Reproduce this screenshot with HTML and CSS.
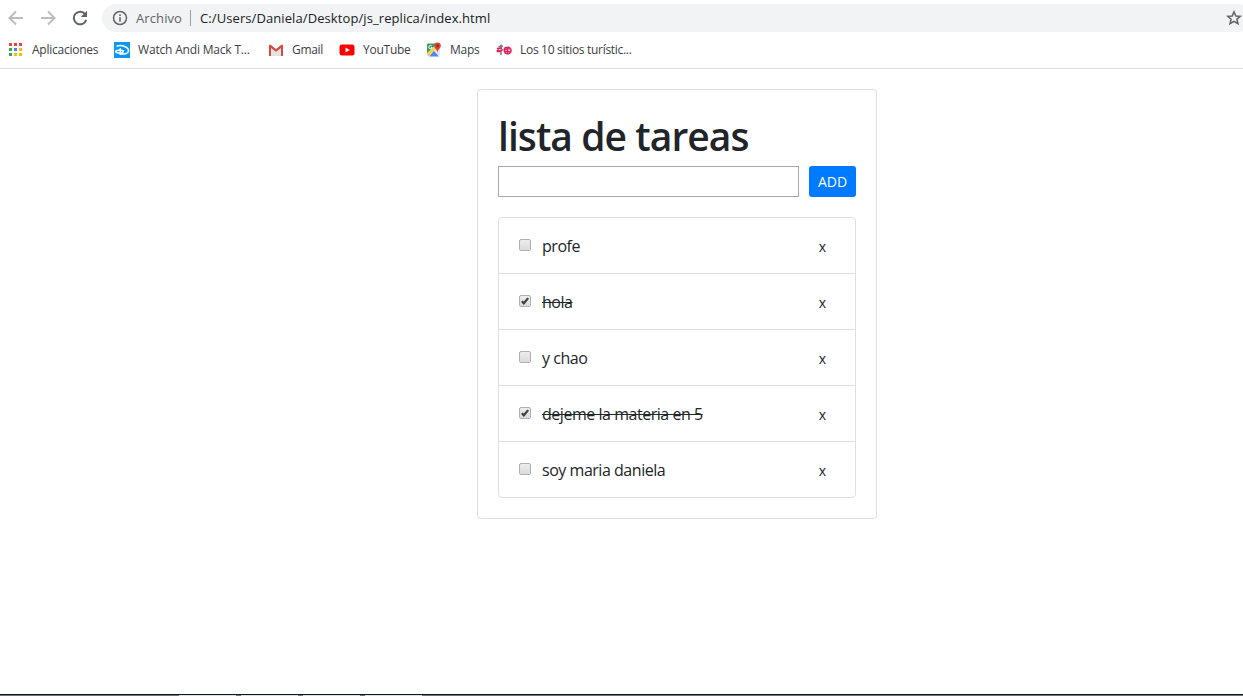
FILE: index.html
```html
<!DOCTYPE html>
<html lang="es">
<head>
<meta charset="utf-8">
<title>lista de tareas</title>
<link rel="stylesheet" href="styles.css">
</head>
<body>
<header class="browser">
  <div class="toolbar">
    <svg class="nav back" width="16" height="16" viewBox="0 0 16 16"><path d="M15 8H2M8 1.500L1.500 8L8 14.500"/></svg>
    <svg class="nav forward" width="16" height="16" viewBox="0 0 16 16"><path d="M1 8H14M8 1.500L14.500 8L8 14.500"/></svg>
    <svg class="nav reload" width="16" height="16" viewBox="0 0 16 16"><path d="M13.200 4.300A6.300 6.300 0 1 0 14.200 9.700"/><path class="tip" d="M15 .8V7H8.800z"/></svg>
    <div class="address">
      <svg class="info" width="16" height="16" viewBox="0 0 16 16"><circle cx="8" cy="8" r="6.500"/><path d="M8 7V11.700M8 4.300V6"/></svg>
      <span class="scheme">Archivo</span>
      <span class="url">C:/Users/Daniela/Desktop/js_replica/index.html</span>
      <svg class="star" width="16" height="16" viewBox="0 0 16 16"><path d="M8 1.800L9.800 6L14.300 6.300L10.900 9.300L12 13.700L8 11.300L4 13.700L5.100 9.300L1.700 6.300L6.200 6z"/></svg>
    </div>
  </div>
  <nav class="bookmarks">
    <a class="bookmark apps"><svg width="16" height="16" viewBox="0 0 16 16"><path fill="#ea4335" d="M1 1h3v3H1zM6 1h3v3H6zM11 1h3v3h-3z"/><path fill="#34a853" d="M1 6h3v3H1zM1 11h3v3H1z"/><path fill="#4285f4" d="M6 6h3v3H6z"/><path fill="#fbbc05" d="M11 6h3v3h-3zM6 11h3v3H6zM11 11h3v3h-3z"/></svg><span>Aplicaciones</span></a>
    <a class="bookmark disney"><svg width="16" height="16" viewBox="0 0 16 16"><path fill="#0a97f5" d="M0 0h16v16H0z"/><path fill="none" stroke="#fff" stroke-width="1.500" d="M2.500 4.200C8 2.500 14.800 5 14.500 8.800C14.200 12.200 9.500 12.300 6.800 12M6.300 6.300V13M10 9.300C6 7.500 1.500 8 1.700 9.500C2 11.200 6 11.300 9.500 10.300"/></svg><span>Watch Andi Mack T...</span></a>
    <a class="bookmark gmail"><svg width="16" height="16" viewBox="0 0 16 16"><path fill="#e3e3e3" d="M2 3h12v11H2z"/><path fill="#fff" d="M3 3h10L8 7z"/><path fill="#d54b3d" d="M1 3.500Q1 2.500 2.200 2.500L8 7.100L13.800 2.500Q15 2.500 15 3.500V14H13V6L8 9.800L3 6V14H1z"/></svg><span>Gmail</span></a>
    <a class="bookmark youtube"><svg width="16" height="16" viewBox="0 0 16 16"><rect x=".5" y="2.500" width="15" height="11" rx="2.500" fill="#f00"/><path fill="#fff" d="M6.500 5.500v5L10.800 8z"/></svg><span>YouTube</span></a>
    <a class="bookmark maps"><svg width="16" height="16" viewBox="0 0 16 16"><path fill="#34a261" d="M1 2.500Q1 1.500 2 1.500H11L1 12z"/><path fill="#e4e6e8" d="M1 12L11 2l3 3V13L11 14L8 9L3 14H1z"/><path fill="#ffd04c" d="M1 11L8.500 4.500L10 7L3 14Q1 14 1 12z"/><path fill="#4a89f3" d="M3 14.500l5-5.500 5 5.500z"/><path fill="none" stroke="#fff" d="M5.800 4A1.700 1.700 0 1 0 6.200 5.500H4.700"/><path fill="#db4437" d="M11.500.5A3.300 3.300 0 0 0 8.200 3.800C8.200 6.500 10.800 7 11.500 10.500C12.200 7 14.800 6.500 14.800 3.800A3.300 3.300 0 0 0 11.500.5"/><circle cx="11.500" cy="3.800" r="1.200" fill="#862d26"/></svg><span>Maps</span></a>
    <a class="bookmark tour"><svg width="16" height="16" viewBox="0 0 16 16"><g fill="none" stroke-width="1.400"><path stroke="#777" d="M2.500 4.500L7 4M5 2.500V13"/><path stroke="#df245e" d="M1 6.500L6 6M.8 9.500Q2 6.500 4 9.500L7 7.500M4 9.500L1 9.500M8.500 6Q7.500 11.500 11 11.800Q15.500 12 15 7.500Q13.500 3.800 8.500 6M9 7.500L14 6.500M11.500 5V11M8.500 9.500H14.500"/></g></svg><span>Los 10 sitios turístic...</span></a>
  </nav>
</header>
<main class="page">
  <section class="card">
    <h1 class="title">lista de tareas</h1>
    <form class="entry"><input class="field" type="text" aria-label="tarea"><button class="add" type="button">ADD</button></form>
    <ul class="tasks">
      <li class="task"><i class="box"></i><span class="label">profe</span><span class="remove">x</span></li>
      <li class="task done"><i class="box"><svg width="10" height="10" viewBox="0 0 11 11"><path d="M2 5.800L4.200 8L9 2.300"/></svg></i><span class="label">hola</span><span class="remove">x</span></li>
      <li class="task"><i class="box"></i><span class="label">y chao</span><span class="remove">x</span></li>
      <li class="task done"><i class="box"><svg width="10" height="10" viewBox="0 0 11 11"><path d="M2 5.800L4.200 8L9 2.300"/></svg></i><span class="label">dejeme la materia en 5</span><span class="remove">x</span></li>
      <li class="task"><i class="box"></i><span class="label">soy maria daniela</span><span class="remove">x</span></li>
    </ul>
  </section>
</main>
<footer class="taskbar"><i class="left"></i><i class="window"></i><i class="window"></i><i class="window"></i><i class="window"></i></footer>
</body>
</html>
```
FILE: styles.css
```css
* { box-sizing: border-box; }
body { margin: 0; height: 696px; display: flex; flex-direction: column; overflow: hidden; background: #fff; color: #212529; font-family: "Open Sans", "Noto Sans", sans-serif; }
svg { display: block; flex: none; }
span { white-space: nowrap; }
.browser { flex: none; height: 69px; border-bottom: 1px solid #dadce0; padding-top: 4px; }
.toolbar { display: flex; align-items: center; height: 28px; padding-left: 8px; }
.nav { margin-right: 16px; fill: none; stroke: #babcbe; stroke-width: 2; }
.reload { margin-right: 14px; stroke: #5f6368; }
.nav .tip { fill: #5f6368; stroke: none; }
.address { flex: 1; height: 28px; display: flex; align-items: center; background: #f1f3f4; border-radius: 14px 3px 3px 14px; padding-left: 10px; font-size: 13px; }
.info, .star { fill: none; stroke: #5f6368; stroke-width: 1.5; }
.scheme { width: 55px; margin-left: 8px; color: #5f6368; border-right: 1px solid #9aa0a6; line-height: 16px; letter-spacing: .1px; }
.url { margin-left: 9px; color: #202124; letter-spacing: .09px; }
.star { margin-left: auto; margin-right: 1px; }
.bookmarks { display: flex; height: 36px; align-items: center; padding-left: 8px; font-size: 12px; letter-spacing: -.25px; color: #3c4043; }
.bookmark { display: flex; align-items: center; gap: 8px; }
.bookmark span { padding-bottom: 1px; }
.apps { width: 106px; }
.disney { width: 154px; letter-spacing: -.18px; }
.gmail { width: 71px; letter-spacing: -.3px; }
.youtube { width: 87px; }
.maps { width: 70px; }
.tour { letter-spacing: -.3px; }
.page { flex: 1; padding: 20px 0 0 477px; }
.card { width: 400px; height: 430px; border: 1px solid #dfdfdf; border-radius: 4px; padding: 20px; }
.title { height: 48px; margin: 0 0 8px; padding-top: 2px; font-size: 39px; line-height: 48px; font-weight: 600; letter-spacing: -.95px; }
.entry { display: flex; gap: 10px; height: 31px; margin: 0 0 20px; }
.field { width: 301px; border: 1px solid #a9a9a9; padding: 1px 8px; }
.add { width: 47px; border: 0; border-radius: 3px; padding: 0; background: #007bff; color: #fff; font: 14px "Open Sans", sans-serif; }
.tasks { list-style: none; margin: 0; padding: 0; border: 1px solid #dfdfdf; border-radius: 4px; }
.task { display: flex; align-items: center; height: 56px; padding: 0 29px 0 20px; border-bottom: 1px solid #dfdfdf; font-size: 16px; }
.task:last-child { border-bottom: 0; height: 55px; }
.box { width: 12px; height: 12px; margin: -1px 11px 0 0; border: 1px solid #b0b0b0; border-radius: 2px; background: linear-gradient(#ececec, #dcdcdc); }
.box path { fill: none; stroke: #3f3f3f; stroke-width: 2.4; }
.label { letter-spacing: -.47px; }
.done .label { text-decoration: line-through; }
.remove { margin-left: auto; padding-top: 2px; font-size: 14px; }
.taskbar { flex: none; display: flex; height: 2px; border-top: 1px solid #10151b; background: #6d7782; }
.left { width: 179px; }
.window { width: 57px; margin-right: 5px; background: #dfe2e5; }
```
